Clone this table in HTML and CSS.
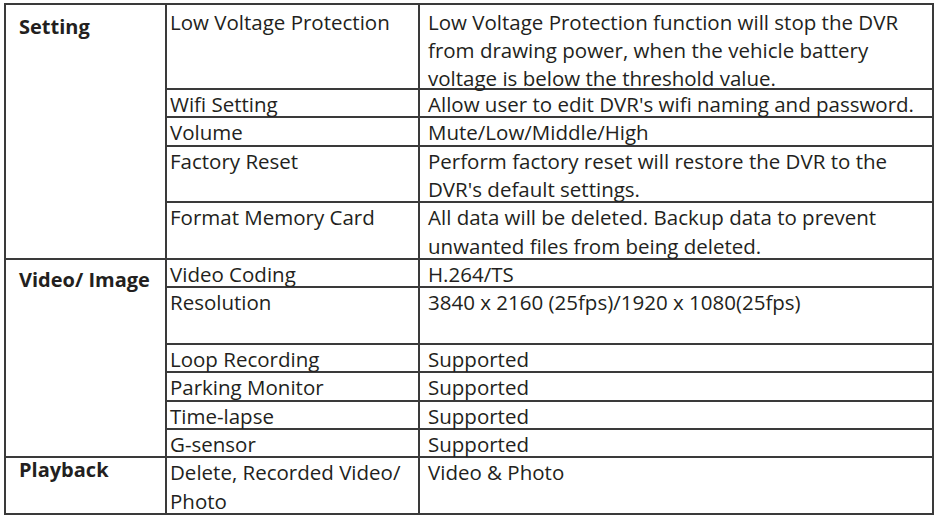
FILE: index.html
```html
<!DOCTYPE html>
<html lang="en">
<head>
<meta charset="utf-8">
<title>DVR Specifications</title>
<link rel="stylesheet" href="styles.css">
</head>
<body>
<table class="spec">
  <colgroup>
    <col class="c-group">
    <col class="c-item">
    <col class="c-desc">
  </colgroup>
  <tbody>
    <tr class="first">
      <th class="group g-setting" rowspan="5">Setting</th>
      <td class="item"><span class="t">Low Voltage Protection</span></td>
      <td class="desc"><span class="t">Low Voltage Protection function will stop the DVR<br>from drawing power, when the vehicle battery<br>voltage is below the threshold value.</span></td>
    </tr>
    <tr>
      <td class="item"><span class="t">Wifi Setting</span></td>
      <td class="desc"><span class="t">Allow user to edit DVR's wifi naming and password.</span></td>
    </tr>
    <tr>
      <td class="item"><span class="t">Volume</span></td>
      <td class="desc"><span class="t">Mute/Low/Middle/High</span></td>
    </tr>
    <tr>
      <td class="item"><span class="t">Factory Reset</span></td>
      <td class="desc"><span class="t">Perform factory reset will restore the DVR to the<br>DVR's default settings.</span></td>
    </tr>
    <tr>
      <td class="item"><span class="t">Format Memory Card</span></td>
      <td class="desc"><span class="t">All data will be deleted. Backup data to prevent<br>unwanted files from being deleted.</span></td>
    </tr>
    <tr>
      <th class="group g-video" rowspan="6">Video/ Image</th>
      <td class="item"><span class="t">Video Coding</span></td>
      <td class="desc"><span class="t">H.264/TS</span></td>
    </tr>
    <tr class="tall">
      <td class="item"><span class="t">Resolution</span></td>
      <td class="desc"><span class="t">3840 x 2160 (25fps)/1920 x 1080(25fps)</span></td>
    </tr>
    <tr>
      <td class="item"><span class="t">Loop Recording</span></td>
      <td class="desc"><span class="t">Supported</span></td>
    </tr>
    <tr>
      <td class="item"><span class="t">Parking Monitor</span></td>
      <td class="desc"><span class="t">Supported</span></td>
    </tr>
    <tr>
      <td class="item"><span class="t">Time-lapse</span></td>
      <td class="desc"><span class="t">Supported</span></td>
    </tr>
    <tr>
      <td class="item"><span class="t">G-sensor</span></td>
      <td class="desc"><span class="t">Supported</span></td>
    </tr>
    <tr>
      <th class="group g-playback">Playback</th>
      <td class="item"><span class="t">Delete, Recorded Video/<br>Photo</span></td>
      <td class="desc"><span class="t">Video &amp; Photo</span></td>
    </tr>
  </tbody>
</table>
</body>
</html>
```

FILE: styles.css
```css
html, body {
  margin: 0;
  padding: 0;
  background: #ffffff;
}

body {
  padding: 3px 0 0 4px;
  font-family: "Open Sans", "Noto Sans", sans-serif;
  color: #231f20;
}

.spec {
  border-collapse: collapse;
  table-layout: fixed;
  width: 928px;
  font-size: 20.5px;
  line-height: 28.33px;
}

.c-group { width: 161px; }
.c-item { width: 253px; }
.c-desc { width: 514px; }

.spec th,
.spec td {
  border: 2px solid #3a3a3a;
  padding: 0;
  vertical-align: top;
  text-align: left;
  white-space: nowrap;
}

.t {
  display: block;
  margin-bottom: -2px;
}

.first td {
  padding-top: 3px;
}

.first .t {
  line-height: 28px;
  margin-bottom: -4px;
}

.tall .t {
  min-height: 56.67px;
}

.item {
  padding-left: 3px !important;
}

.desc {
  padding-left: 8px !important;
}

.group {
  font-size: 20px;
  font-weight: 700;
  line-height: 28px;
  padding-left: 13px !important;
}

.g-setting { padding-top: 8px !important; }
.g-video { padding-top: 6px !important; }
.g-playback {
  padding-top: 0 !important;
  line-height: 24px;
}
```
